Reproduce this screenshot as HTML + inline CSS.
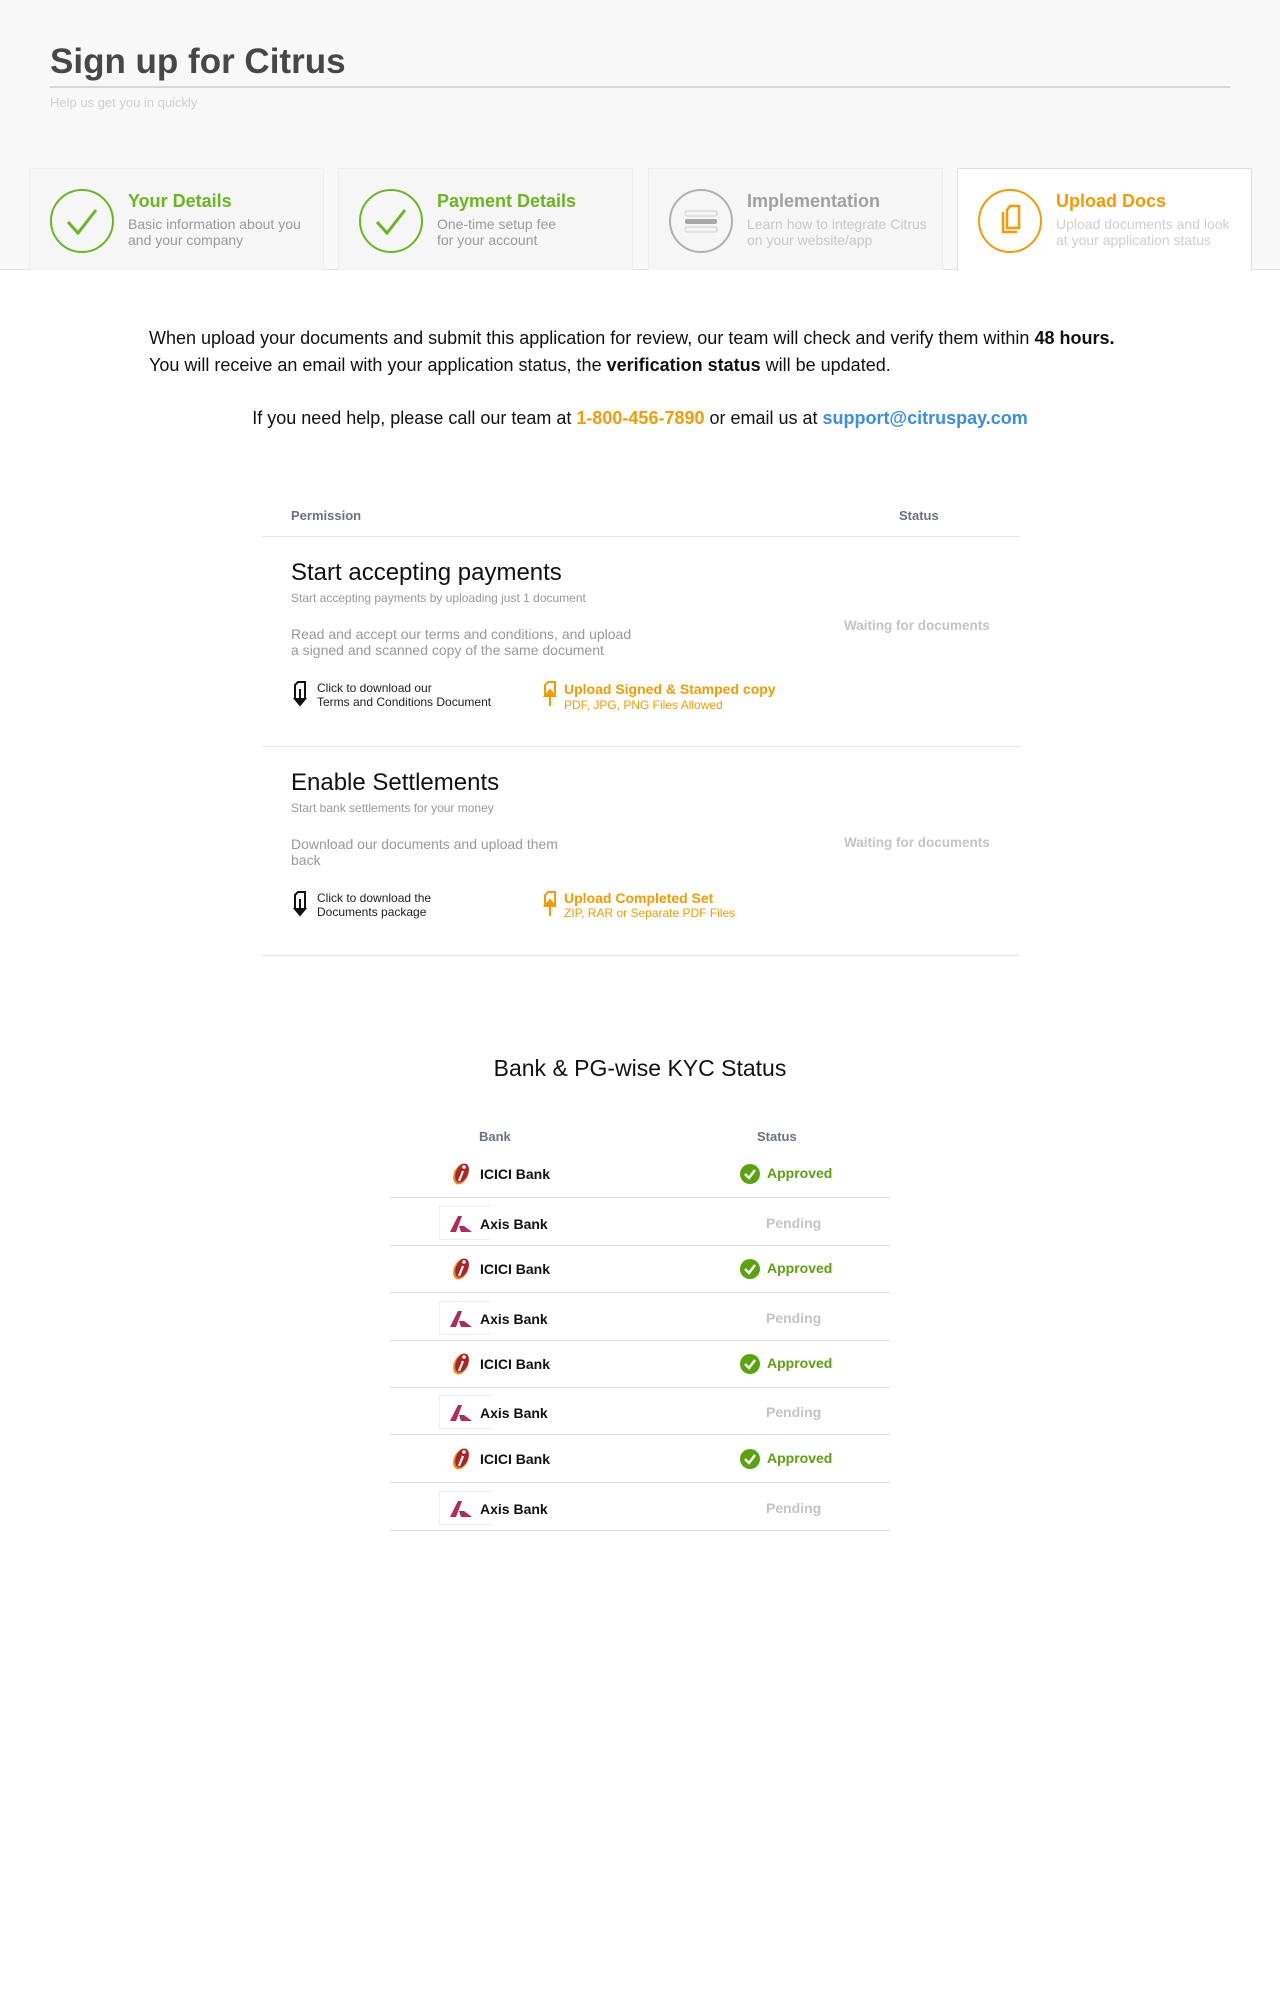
<!DOCTYPE html>
<html><head><meta charset="utf-8"><style>
*{margin:0;padding:0;box-sizing:border-box}
body{width:1280px;height:2000px;background:#fff;font-family:"Liberation Sans",Arial,sans-serif;position:relative;overflow:hidden}
.a{position:absolute;white-space:nowrap}
.hdr{position:absolute;left:0;top:0;width:1280px;height:270px;background:#f8f8f8;border-bottom:1px solid #e2e2e2}
.tab{position:absolute;top:168px;height:102px;width:295px;border:1px solid #eeeeee;border-bottom:none;background:#f6f6f6}
.tab.act{background:#fff;border-color:#e0e0e0;height:103px}
.circ{position:absolute;left:20px;top:20px;width:64px;height:64px;border-radius:50%;border:2px solid #6bb521}
.tt{position:absolute;left:98px;top:22px;font-size:18px;font-weight:bold}
.td{position:absolute;left:98px;top:47px;font-size:14px;line-height:16px;color:#9a9a9a}
.th{font-size:13px;font-weight:bold;color:#6a7383}
.line{position:absolute;height:1px;background:#e6e6e6}
.bank{font-size:14px;font-weight:bold;color:#111}
.ap{font-size:14px;font-weight:bold;color:#5ba20f}
.pe{font-size:14px;font-weight:bold;color:#c4c4c4}
</style></head><body>
<div class="hdr"></div>
<div class="a" style="left:50px;top:42px;font-size:35px;font-weight:bold;color:#474747">Sign up for Citrus</div>
<div class="line" style="left:50px;top:86px;width:1180px;background:#d8d8d8;height:2px"></div>
<div class="a" style="left:50px;top:95px;font-size:13px;color:#cfcfcf">Help us get you in quickly</div>

<div class="tab" style="left:29px">
 <div class="circ"><svg width="60" height="60" viewBox="0 0 60 60" style="position:absolute;left:0;top:0"><path d="M16 31 L26 42 L44 19" fill="none" stroke="#6bb521" stroke-width="3"/></svg></div>
 <div class="tt" style="color:#6bb521">Your Details</div>
 <div class="td">Basic information about you<br>and your company</div>
</div>
<div class="tab" style="left:338px">
 <div class="circ"><svg width="60" height="60" viewBox="0 0 60 60" style="position:absolute;left:0;top:0"><path d="M16 31 L26 42 L44 19" fill="none" stroke="#6bb521" stroke-width="3"/></svg></div>
 <div class="tt" style="color:#6bb521">Payment Details</div>
 <div class="td">One-time setup fee<br>for your account</div>
</div>
<div class="tab" style="left:648px">
 <div class="circ" style="border-color:#b0b0b0"><svg width="60" height="60" viewBox="0 0 60 60" style="position:absolute;left:0;top:0"><rect x="14" y="20" width="32" height="5" rx="2" fill="none" stroke="#ccc"/><rect x="14" y="28" width="32" height="5" rx="2" fill="#a8a8a8"/><rect x="14" y="36" width="32" height="5" rx="2" fill="none" stroke="#ccc"/></svg></div>
 <div class="tt" style="color:#a0a0a0">Implementation</div>
 <div class="td" style="color:#c8c8c8">Learn how to integrate Citrus<br>on your website/app</div>
</div>
<div class="tab act" style="left:957px">
 <div class="circ" style="border-color:#f59c00"><svg width="60" height="60" viewBox="0 0 60 60" style="position:absolute;left:0;top:0"><path d="M23 21 L23 41 L37 41" fill="none" stroke="#f59c00" stroke-width="2.5"/><path d="M27 19 L30 15 L39 15 L39 37 L27 37 Z" fill="none" stroke="#f59c00" stroke-width="2.5"/></svg></div>
 <div class="tt" style="color:#f59c00">Upload Docs</div>
 <div class="td" style="color:#cfcfcf">Upload documents and look<br>at your application status</div>
</div>

<div class="a" style="left:149px;top:325px;font-size:18px;line-height:27px;color:#111">When upload your documents and submit this application for review, our team will check and verify them within <b>48 hours.</b><br>You will receive an email with your application status, the <b>verification status</b> will be updated.</div>
<div class="a" style="left:0;width:1280px;text-align:center;top:408px;font-size:18px;color:#111">If you need help, please call our team at <b style="color:#f59c00">1-800-456-7890</b> or email us at <b style="color:#3a8ee6">support@citruspay.com</b></div>

<div class="a th" style="left:291px;top:508px">Permission</div>
<div class="a th" style="left:899px;top:508px">Status</div>
<div class="line" style="left:262px;top:536px;width:758px"></div>

<div class="a" style="left:291px;top:559px;font-size:24px;color:#111">Start accepting payments</div>
<div class="a" style="left:291px;top:591px;font-size:12px;color:#999">Start accepting payments by uploading just 1 document</div>
<div class="a" style="left:291px;top:626px;font-size:14px;line-height:16px;color:#999">Read and accept our terms and conditions, and upload<br>a signed and scanned copy of the same document</div>
<div class="a" style="left:844px;top:618px;font-size:13.5px;font-weight:bold;color:#c4c4c4">Waiting for documents</div>
<svg class="a" style="left:292px;top:681px" width="16" height="26" viewBox="0 0 16 26"><path d="M3 18 L3 4 L6 1 L13 1 L13 18" fill="none" stroke="#111" stroke-width="2"/><path d="M8 8 L8 20 M3 18 L8 24 L13 18 Z" fill="#111" stroke="#111" stroke-width="2"/></svg>
<div class="a" style="left:317px;top:681px;font-size:12px;line-height:14px;color:#222">Click to download our<br>Terms and Conditions Document</div>
<svg class="a" style="left:542px;top:681px" width="16" height="26" viewBox="0 0 16 26"><path d="M3 16 L3 4 L6 1 L13 1 L13 16" fill="none" stroke="#f59c00" stroke-width="2"/><path d="M8 25 L8 13 M3 15 L8 9 L13 15 Z" fill="#f59c00" stroke="#f59c00" stroke-width="2"/></svg>
<div class="a" style="left:564px;top:681px;font-size:14px;font-weight:bold;color:#f59c00">Upload Signed &amp; Stamped copy</div>
<div class="a" style="left:564px;top:698px;font-size:12px;color:#f59c00">PDF, JPG, PNG Files Allowed</div>
<div class="line" style="left:262px;top:746px;width:758px"></div>

<div class="a" style="left:291px;top:769px;font-size:24px;color:#111">Enable Settlements</div>
<div class="a" style="left:291px;top:801px;font-size:12px;color:#999">Start bank settlements for your money</div>
<div class="a" style="left:291px;top:836px;font-size:14px;line-height:16px;color:#999">Download our documents and upload them<br>back</div>
<div class="a" style="left:844px;top:835px;font-size:13.5px;font-weight:bold;color:#c4c4c4">Waiting for documents</div>
<svg class="a" style="left:292px;top:891px" width="16" height="26" viewBox="0 0 16 26"><path d="M3 18 L3 4 L6 1 L13 1 L13 18" fill="none" stroke="#111" stroke-width="2"/><path d="M8 8 L8 20 M3 18 L8 24 L13 18 Z" fill="#111" stroke="#111" stroke-width="2"/></svg>
<div class="a" style="left:317px;top:891px;font-size:12px;line-height:14px;color:#222">Click to download the<br>Documents package</div>
<svg class="a" style="left:542px;top:891px" width="16" height="26" viewBox="0 0 16 26"><path d="M3 16 L3 4 L6 1 L13 1 L13 16" fill="none" stroke="#f59c00" stroke-width="2"/><path d="M8 25 L8 13 M3 15 L8 9 L13 15 Z" fill="#f59c00" stroke="#f59c00" stroke-width="2"/></svg>
<div class="a" style="left:564px;top:890px;font-size:14px;font-weight:bold;color:#f59c00">Upload Completed Set</div>
<div class="a" style="left:564px;top:906px;font-size:12px;color:#f59c00">ZIP, RAR or Separate PDF Files</div>
<div class="line" style="left:262px;top:955px;width:758px"></div>

<div class="a" style="left:0;width:1280px;text-align:center;top:1055px;font-size:23px;color:#111">Bank &amp; PG-wise KYC Status</div>
<div class="a th" style="left:479px;top:1129px">Bank</div>
<div class="a th" style="left:757px;top:1129px">Status</div>

<div id="rows"></div>
<script>
var ys=[1150,1198,1245,1293,1340,1387,1435,1483];
var h='';
ys.forEach(function(y,i){
 var ic=i%2==0;
 var c=y+24;
 if(ic){
  h+='<svg class="a" style="left:450px;top:'+(c-12)+'px" width="22" height="24" viewBox="0 0 22 24"><ellipse cx="11" cy="12" rx="7" ry="11" transform="rotate(25 11 12)" fill="#f08a1c"/><ellipse cx="12" cy="11" rx="6" ry="10" transform="rotate(25 12 11)" fill="#a8262a"/><circle cx="14" cy="5" r="1.8" fill="#fff"/><path d="M13 9 L9 19" stroke="#fff" stroke-width="2.2"/></svg>';
  h+='<div class="a bank" style="left:480px;top:'+(c-8)+'px">ICICI Bank</div>';
  h+='<svg class="a" style="left:740px;top:'+(c-10)+'px" width="20" height="20" viewBox="0 0 20 20"><circle cx="10" cy="10" r="10" fill="#5ba20f"/><path d="M5 10 L9 14 L15 6" fill="none" stroke="#fff" stroke-width="2.5"/></svg>';
  h+='<div class="a ap" style="left:767px;top:'+(c-9)+'px">Approved</div>';
 }else{
  h+='<div class="a" style="left:439px;top:'+(c-16)+'px;width:52px;height:34px;border:1px solid #eee;border-right:none"></div>';
  h+='<svg class="a" style="left:450px;top:'+(c-6)+'px" width="22" height="16" viewBox="0 0 22 16"><path d="M0 16 L8 0 L12 0 L6 16 Z M9 10 L14 10 L22 16 L11 16 Z" fill="#ae2a5f"/></svg>';
  h+='<div class="a bank" style="left:480px;top:'+(c-6)+'px">Axis Bank</div>';
  h+='<div class="a pe" style="left:766px;top:'+(c-7)+'px">Pending</div>';
 }
 h+='<div class="line" style="left:390px;top:'+(y+47)+'px;width:500px;background:#dedede"></div>';
});
document.getElementById('rows').innerHTML=h;
</script>
</body></html>
